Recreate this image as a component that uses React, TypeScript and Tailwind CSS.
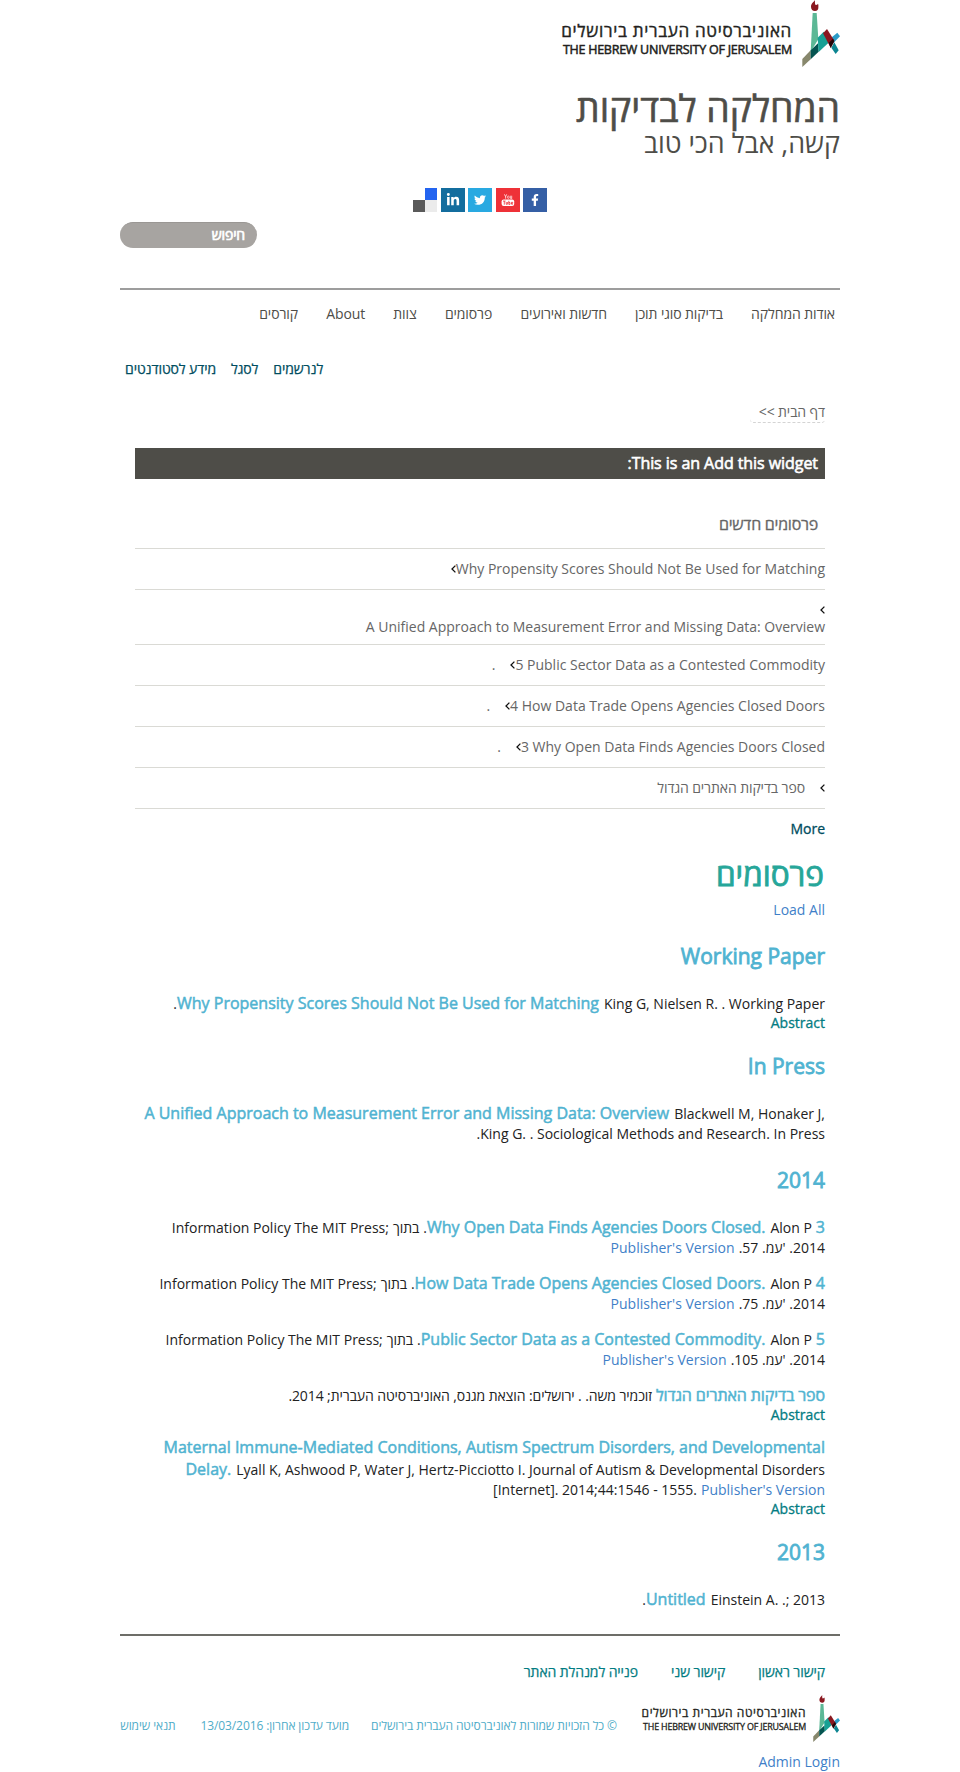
import type { ReactNode } from "react";
import { FaFacebookF, FaLinkedinIn, FaTwitter } from "react-icons/fa";

function Emblem({ className }: { className: string }) {
  return (
    <svg viewBox="37 0 114 201" className={className} preserveAspectRatio="none">
      <path d="M76 0c-3 6-12 10-12 20 0 8 5 13 12 13s10-5 10-9c0-5 1-9-1-13-2 3-5 4-7 4-3-4-2-9-2-15z" fill="#8a1820" />
      <polygon points="69,39 81,39 86,118 63,155" fill="#5cb896" />
      <polygon points="38,177 63,151 63,178 38,201" fill="#87876c" />
      <polygon points="63,151 86,129 87,155 63,178" fill="#045450" />
      <polygon points="84,113 102,95 120,125 87,156" fill="#17a094" />
      <polygon points="143,98 151,109 129,131 119,118" fill="#2b9bc6" />
      <polygon points="125,143 134,127 147,151 138,162" fill="#0c8591" />
      <polygon points="100,100 112,87 134,122 123,143" fill="#8a1820" />
      <polygon points="117,129 130,116 134,124 123,144" fill="#24060a" />
    </svg>
  );
}

function Chevron() {
  return (
    <svg viewBox="0 0 5 8" className="mt-[6px] h-2 w-[5px] shrink-0">
      <path d="M4.4 0.6 1 4l3.4 3.4" fill="none" stroke="#111" strokeWidth="1.3" />
    </svg>
  );
}

function He({ children, className = "" }: { children: ReactNode; className?: string }) {
  return (
    <span dir="rtl" className={`tracking-[-0.1px] ${className}`}>
      {children}
    </span>
  );
}

function Line({ children, className = "" }: { children: ReactNode; className?: string }) {
  return <div className={`flex h-5 items-baseline justify-end leading-5 ${className}`}>{children}</div>;
}

function Title({ children, className = "" }: { children: ReactNode; className?: string }) {
  return (
    <a className={`text-base leading-5 text-[#50b3d1] [-webkit-text-stroke:0.5px_#50b3d1] ${className}`}>{children}</a>
  );
}

function YearHeading({ children, className }: { children: ReactNode; className: string }) {
  return (
    <h3
      className={`h-[30px] text-right text-[21px] leading-[30px] text-[#50b3d1] [-webkit-text-stroke:0.8px_#50b3d1] ${className}`}
    >
      {children}
    </h3>
  );
}

function Abstract({ className = "" }: { className?: string }) {
  return (
    <Line className={`text-[#037c82] [-webkit-text-stroke:0.3px_#037c82] ${className}`}>
      <a>Abstract</a>
    </Line>
  );
}

function Publisher() {
  return <a className="text-[#3f7fc8]">Publisher's Version</a>;
}

function Chapter({ n, title, page, first }: { n: string; title: string; page: string; first?: boolean }) {
  return (
    <article className={first ? "mt-[22px]" : "mt-[15px]"}>
      <Line>
        <span className="mr-1">Information Policy The MIT Press;</span>
        <He>בתוך</He>
        <span className="ml-1">.</span>
        <Title>{title}</Title>
        <span className="mr-1 ml-[5px]">Alon P</span>
        <Title>{n}</Title>
      </Line>
      <Line className="mt-px">
        <Publisher />
        <span dir="rtl" className="ml-[4px]">
          2014. 'עמ. {page}.
        </span>
      </Line>
    </article>
  );
}

function News({ children }: { children: ReactNode }) {
  return (
    <li className="h-[41px] border-t border-[#dadad5] pt-[10px] leading-5 text-[#666]">
      <div className="flex justify-end">{children}</div>
    </li>
  );
}

export default function App() {
  return (
    <div className="min-h-[1772px] bg-white font-['Open_Sans','Noto_Sans',sans-serif] text-sm whitespace-nowrap text-[#222]">
      <div className="mx-auto w-[720px]">
        <header>
          <div className="flex h-[67px] justify-end gap-[10px]">
            <div className="flex w-[230px] flex-col items-end pt-[20px] text-[#231f20]">
              <div dir="rtl" className="h-[22px] text-[17px] leading-[22px] tracking-[0.7px] [-webkit-text-stroke:0.4px_#231f20]">
                האוניברסיטה העברית בירושלים
              </div>
              <div className="h-4 text-[12.5px] leading-4 tracking-[-0.25px] [-webkit-text-stroke:0.5px_#231f20]">
                THE HEBREW UNIVERSITY OF JERUSALEM
              </div>
            </div>
            <Emblem className="h-[67px] w-[38px]" />
          </div>
          <h1 dir="rtl" className="mt-[21px] h-10 text-[37.3px] leading-10 text-[#4e4d48] [-webkit-text-stroke:0.6px_#4e4d48]">
            המחלקה לבדיקות
          </h1>
          <h2 dir="rtl" className="h-[30px] text-[26.8px] leading-[30px] text-[#4e4d48]">
            קשה, אבל הכי טוב
          </h2>
          <div className="mx-auto mt-[30px] flex h-6 w-[134px] justify-between text-white">
            <div className="grid h-6 w-6 grid-cols-2 grid-rows-2">
              <i className="bg-white" />
              <i className="bg-[#2364f0]" />
              <i className="bg-[#5a5a5a]" />
              <i className="bg-[#ebebeb]" />
            </div>
            <div className="flex h-6 w-6 items-center justify-center bg-[#136d9e]">
              <FaLinkedinIn className="h-[14px] w-[14px]" />
            </div>
            <div className="flex h-6 w-6 items-center justify-center bg-[#29a9e1]">
              <FaTwitter className="h-3 w-3" />
            </div>
            <div className="flex h-6 w-6 items-center justify-center bg-[#ee3138]">
              <svg viewBox="0 0 24 24" className="h-6 w-6">
                <path d="m8.4 6.3 1.2 2.4 1.1-2.4M9.6 8.6v2.1M14.3 7.7v2.6h1.4M15.7 7.7v3" fill="none" stroke="#fff" strokeWidth=".7" />
                <ellipse cx="12.3" cy="9.2" rx=".9" ry="1.2" fill="none" stroke="#fff" strokeWidth=".6" />
                <rect x="5.6" y="11.5" width="12.6" height="6.4" rx="2" fill="#fff" />
                <path d="M7 13.1h2.6M8.3 13.1v3.6M10.2 14v2.3h1.2V14M12.8 12.8v3.6H14v-1.9h-1.2M16.9 16.2h-1.4v-1.9h1.2v1h-1.2" fill="none" stroke="#ee3138" strokeWidth=".8" />
              </svg>
            </div>
            <div className="flex h-6 w-6 items-center justify-center bg-[#355fa5]">
              <FaFacebookF className="h-3 w-3" />
            </div>
          </div>
          <div
            dir="rtl"
            className="mt-[10px] mr-auto h-[26px] w-[137px] rounded-full border-t border-[#9a9794] bg-[#a7a4a1] pr-3 text-sm leading-6 tracking-[-0.15px] text-white [-webkit-text-stroke:0.7px_white]"
          >
            חיפוש
          </div>
        </header>

        <nav className="mt-10 flex h-9 justify-end gap-[28.2px] border-t-2 border-[#9d9d9d] pt-[14px] pr-[5px] leading-5 text-[#4e4d48]">
          <He>קורסים</He>
          <span className="tracking-[-0.1px]">About</span>
          <He>צוות</He>
          <He>פרסומים</He>
          <He>חדשות ואירועים</He>
          <He>בדיקות סוגי תוכן</He>
          <He>אודות המחלקה</He>
        </nav>
        <nav className="mt-[35px] flex h-5 gap-[15px] pl-[5px] leading-5 text-[#004d60] [-webkit-text-stroke:0.25px_#004d60]">
          <He>מידע לסטודנטים</He>
          <He>לסגל</He>
          <He>לנרשמים</He>
        </nav>

        <main className="px-[15px]">
          <div dir="rtl" className="mt-[23px] flex h-[21px]">
            <div className="w-[75px] rounded-b-[4px] border-b border-dashed border-[#d4d4d4] leading-5 text-[#666]">
              <He>דף הבית &gt;&gt;</He>
            </div>
          </div>

          <h2
            dir="rtl"
            className="mt-[25px] h-[31px] bg-[#4e4d48] pr-[7px] text-base leading-[31px] tracking-[-0.06px] text-white [-webkit-text-stroke:0.6px_white]"
          >
            This is an Add this widget:
          </h2>

          <h2
            dir="rtl"
            className="mt-[35px] mb-[14px] h-5 pr-[7px] text-base leading-5 tracking-[-0.25px] text-[#666] [-webkit-text-stroke:0.3px_#666]"
          >
            פרסומים חדשים
          </h2>
          <ul className="border-b border-[#dadad5]">
            <News>
              <Chevron />
              <a>Why Propensity Scores Should Not Be Used for Matching</a>
            </News>
            <li className="h-[55px] border-t border-[#dadad5] pt-[10px] leading-5 text-[#666]">
              <div className="flex h-[17px] justify-end">
                <Chevron />
              </div>
              <div className="text-right">A Unified Approach to Measurement Error and Missing Data: Overview</div>
            </li>
            <News>
              <span className="mr-[15px]">.</span>
              <Chevron />
              <a>5 Public Sector Data as a Contested Commodity</a>
            </News>
            <News>
              <span className="mr-[15px]">.</span>
              <Chevron />
              <a>4 How Data Trade Opens Agencies Closed Doors</a>
            </News>
            <News>
              <span className="mr-[15px]">.</span>
              <Chevron />
              <a>3 Why Open Data Finds Agencies Doors Closed</a>
            </News>
            <News>
              <He className="mr-[15px]">ספר בדיקות האתרים הגדול</He>
              <Chevron />
            </News>
          </ul>
          <Line className="mt-[10px] text-[#004d60] [-webkit-text-stroke:0.3px_#004d60]">
            <a>More</a>
          </Line>

          <h1 dir="rtl" className="mt-[15px] h-10 pr-px text-[31.5px] leading-10 text-[#26a699] [-webkit-text-stroke:0.8px_#26a699]">
            פרסומים
          </h1>
          <Line className="mt-[6px] text-[#3f7fc8]">
            <a>Load All</a>
          </Line>

          <YearHeading className="mt-[21px]">Working Paper</YearHeading>
          <Line className="mt-[22px]">
            <span>.</span>
            <Title>Why Propensity Scores Should Not Be Used for Matching</Title>
            <span className="ml-[5px]">King G, Nielsen R. . Working Paper</span>
          </Line>
          <Abstract />

          <YearHeading className="mt-[18px]">In Press</YearHeading>
          <Line className="mt-[22px]">
            <Title>A Unified Approach to Measurement Error and Missing Data: Overview</Title>
            <span className="ml-[5px]">Blackwell M, Honaker J,</span>
          </Line>
          <Line className="mt-px">
            <span>.King G. . Sociological Methods and Research. In Press</span>
          </Line>

          <YearHeading className="mt-[21px]">2014</YearHeading>
          <Chapter first n="3" title="Why Open Data Finds Agencies Doors Closed." page="57" />
          <Chapter n="4" title="How Data Trade Opens Agencies Closed Doors." page="75" />
          <Chapter n="5" title="Public Sector Data as a Contested Commodity." page="105" />
          <Line className="mt-[15px]">
            <He className="mr-1">זוכמיר משה. . ירושלים: הוצאת מגנס, האוניברסיטה העברית; 2014.</He>
            <Title>
              <He>ספר בדיקות האתרים הגדול</He>
            </Title>
          </Line>
          <Abstract />
          <Line className="mt-3">
            <Title>Maternal Immune-Mediated Conditions, Autism Spectrum Disorders, and Developmental</Title>
          </Line>
          <Line className="mt-[2px]">
            <Title>Delay.</Title>
            <span className="ml-[5px]">
              Lyall K, Ashwood P, Water J, Hertz-Picciotto I. Journal of Autism &amp; Developmental Disorders
            </span>
          </Line>
          <Line className="mt-px">
            <span className="mr-1">[Internet]. 2014;44:1546 - 1555.</span>
            <Publisher />
          </Line>
          <Abstract className="-mt-px" />

          <YearHeading className="mt-[18px]">2013</YearHeading>
          <Line className="mt-[22px]">
            <span>.</span>
            <Title>Untitled</Title>
            <span className="ml-[5px]">Einstein A. .; 2013</span>
          </Line>
        </main>

        <footer className="mt-[25px] border-t-2 border-[#6d6d68]">
          <div className="mt-[26px] flex h-5 justify-end gap-[33px] pr-[15px] leading-5 text-[#037c82] [-webkit-text-stroke:0.25px_#037c82]">
            <He>פנייה למנהלת האתר</He>
            <He>קישור שני</He>
            <He>קישור ראשון</He>
          </div>
          <div className="mt-[13px] flex h-[47px] justify-end text-[#231f20]">
            <div className="flex pt-[21px] text-xs leading-5 text-[#50acc8]">
              <He className="mr-[25px]">תנאי שימוש</He>
              <He className="mr-[22px]">מועד עדכון אחרון: 13/03/2016</He>
              <He className="mr-[25px]">© כל הזכויות שמורות לאוניברסיטה העברית בירושלים</He>
            </div>
            <div className="flex w-[164px] flex-col items-end pt-[10px]">
              <div dir="rtl" className="h-4 text-xs leading-4 tracking-[0.55px] [-webkit-text-stroke:0.3px_#231f20]">
                האוניברסיטה העברית בירושלים
              </div>
              <div className="h-3 text-[8.9px] leading-3 tracking-[-0.17px] [-webkit-text-stroke:0.3px_#231f20]">
                THE HEBREW UNIVERSITY OF JERUSALEM
              </div>
            </div>
            <Emblem className="ml-[7px] h-[47px] w-[27px]" />
          </div>
          <Line className="mt-[10px] text-[#3f7fc8]">
            <a>Admin Login</a>
          </Line>
        </footer>
      </div>
    </div>
  );
}
